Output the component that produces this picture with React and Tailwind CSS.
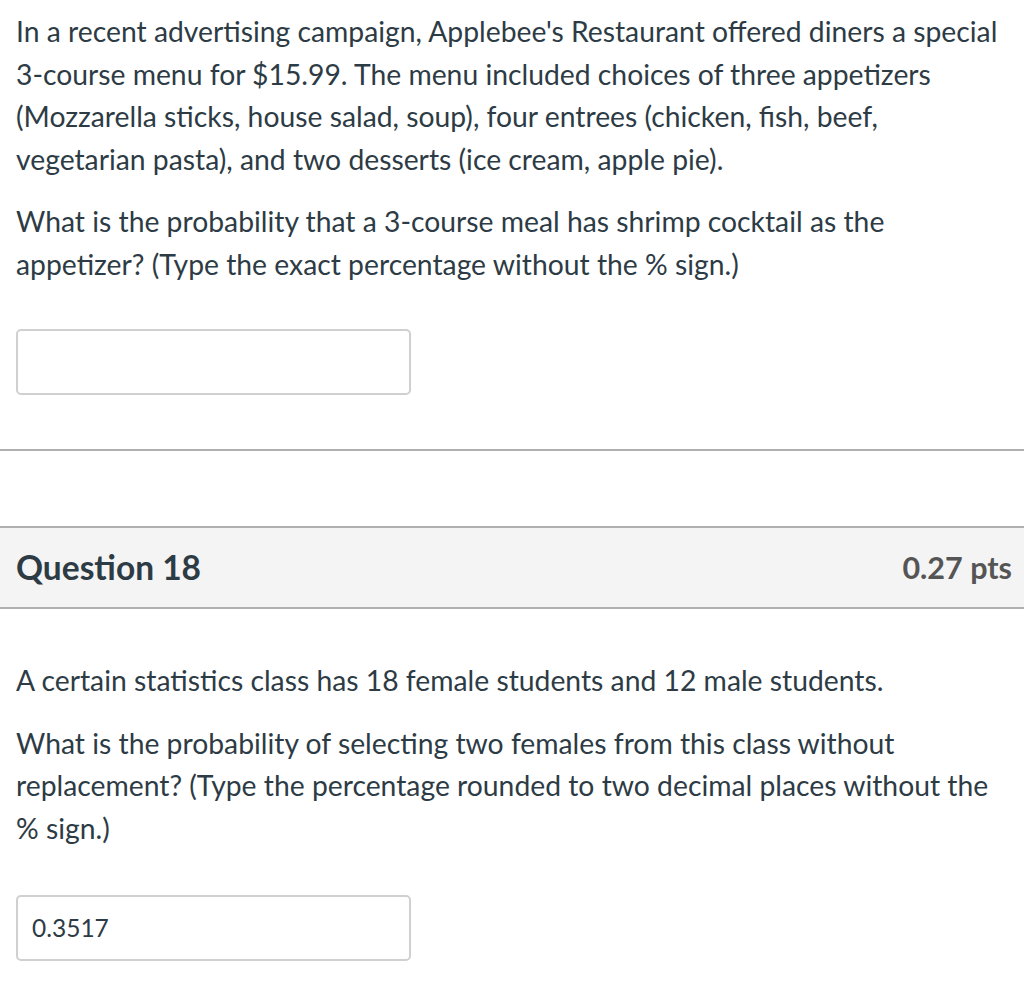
import React from "react";

function AnswerBox({ value }) {
  return (
    <div className="w-[395px] h-[66px] border-2 border-[#d0d0d0] rounded-[5px] bg-white flex items-center px-[14px] text-[24.5px] text-[#2d3b45]">
      {value}
    </div>
  );
}

function App() {
  return (
    <div className="min-h-[999px] bg-white text-[#2d3b45] font-['Lato',sans-serif] text-[28.3px] leading-[42.5px] whitespace-nowrap">
      <div className="px-4 pt-[10px]">
        <p>
          In a recent advertising campaign, Applebee's Restaurant offered diners a special
          <br />
          3-course menu for $15.99. The menu included choices of three appetizers
          <br />
          (Mozzarella sticks, house salad, soup), four entrees (chicken, fish, beef,
          <br />
          vegetarian pasta), and two desserts (ice cream, apple pie).
        </p>
        <p className="mt-[20px]">
          What is the probability that a 3-course meal has shrimp cocktail as the
          <br />
          appetizer? (Type the exact percentage without the % sign.)
        </p>
        <div className="mt-[44px]">
          <AnswerBox value="" />
        </div>
      </div>

      <div className="mt-[54px] h-[2px] bg-[#b0b0b0]" />

      <div className="mt-[75px] border-y-2 border-[#b0b0b0] bg-[#f4f4f4] h-[83px] flex items-center justify-between pl-4 pr-[12px]">
        <h2 className="text-[33.5px] font-bold text-[#2d3b45]">Question 18</h2>
        <span className="text-[30.5px] font-bold text-[#555555]">0.27 pts</span>
      </div>

      <div className="px-4 pt-[50px]">
        <p>A certain statistics class has 18 female students and 12 male students.</p>
        <p className="mt-[20px]">
          What is the probability of selecting two females from this class without
          <br />
          replacement? (Type the percentage rounded to two decimal places without the
          <br />
          % sign.)
        </p>
        <div className="mt-[46px]">
          <AnswerBox value="0.3517" />
        </div>
      </div>
    </div>
  );
}

export default App;
